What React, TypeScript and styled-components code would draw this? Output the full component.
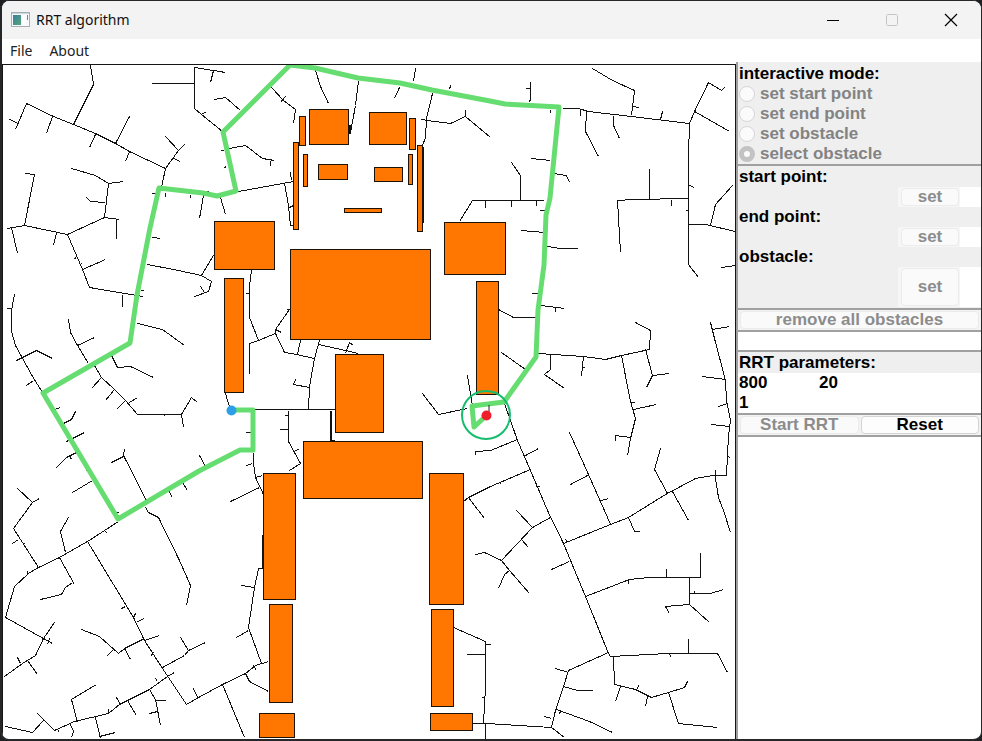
import React from "react";
import styled, { createGlobalStyle } from "styled-components";

const GlobalStyle = createGlobalStyle`
  *, *::before, *::after { box-sizing: border-box; }
  body { margin: 0; background: #1f2022; }
  button, input { font: inherit; margin: 0; }
`;

const Frame = styled.div`
  min-height: 100vh;
  display: flex;
  flex-direction: column;
  border: solid #262729;
  border-width: 1px 1px 2px 2px;
  border-radius: 9px;
  overflow: hidden;
  background: #fff;
  color: #000;
`;

const TitleBar = styled.header`
  display: flex;
  align-items: center;
  height: 38px;
  padding: 0 1px 0 9px;
  background: #f3f3f3;
  font: 14px/20px "Noto Sans", "Open Sans", sans-serif;
`;

const AppIcon = styled.svg`
  width: 19px;
  height: 16px;
  margin-right: 6px;
`;

const Title = styled.h1`
  flex: 1;
  margin: 0;
  font: inherit;
  color: #111;
`;

const CaptionButton = styled.button`
  display: grid;
  place-items: center;
  width: 59px;
  height: 38px;
  padding: 0;
  border: 0;
  background: none;
  svg { width: 14px; height: 14px; }
`;

const MenuBar = styled.nav`
  display: flex;
  align-items: center;
  gap: 17px;
  height: 23px;
  padding-left: 8px;
  font: 14px/20px "Noto Sans", "Open Sans", sans-serif;
`;

const MenuItem = styled.button`
  padding: 0;
  border: 0;
  background: none;
  color: #222;
`;

const Workspace = styled.main`
  flex: 1;
  display: grid;
  grid-template-columns: minmax(0, 1fr) 245px;
`;

const CanvasPane = styled.section`
  margin-top: 2px;
  border: 1px solid #161616;
  border-bottom: 0;
`;

const Plane = styled.svg`
  display: block;
  width: 100%;
`;

const Sidebar = styled.aside`
  border-left: 2px solid #a0a0a0;
  font: bold 17px/20px "Liberation Sans", Arial, sans-serif;
`;

const Panel = styled.div<{ $top?: number; $bottom?: number; $bg?: string }>`
  padding-top: ${(p) => p.$top ?? 0}px;
  padding-bottom: ${(p) => p.$bottom ?? 0}px;
  border-bottom: 2px solid #a0a0a0;
  background: ${(p) => p.$bg ?? "#efefef"};
`;

const ModeGroup = styled.fieldset`
  margin: 0;
  padding: 0;
  border: 0;
  min-width: 0;
`;

const Heading = styled.legend`
  display: block;
  padding: 0 0 0 1px;
`;

const Caption = styled.label`
  display: block;
  padding-left: 1px;
  background: #efefef;
`;

const RadioRow = styled.label`
  display: flex;
  align-items: center;
  gap: 5px;
  height: 20px;
  padding-left: 1px;
  color: #838383;
`;

const Radio = styled.input`
  appearance: none;
  width: 16px;
  height: 16px;
  border: 1px solid #d6d6d6;
  border-radius: 50%;
  background: #fbfbfb;
  &:checked { border: 5px solid #c3c3c3; }
`;

const FieldRow = styled.div<{ $height: number }>`
  display: grid;
  grid-template-columns: 1fr 62px 21px;
  height: ${(p) => p.$height}px;
`;

const ButtonCell = styled.div`
  grid-column: 2;
  display: grid;
  padding: 1px 1px 1px 3px;
  background: #f6f6f6;
`;

const PushButton = styled.button`
  min-width: 0;
  padding: 0;
  border: 1px solid #ebebeb;
  border-radius: 4px;
  background: #fafafa;
  line-height: 16px;
  color: #000;
  &:enabled { border-color: #d4d4d4; background: #fdfdfd; }
  &:disabled { color: #8c8c8c; }
`;

const TextField = styled.input`
  width: 100%;
  min-width: 0;
  height: 100%;
  padding: 0 0 0 1px;
  border: 0;
  border-radius: 0;
  outline: 0;
  background: #fff;
  color: #000;
`;

const ButtonRow = styled.div<{ $columns: number }>`
  display: grid;
  grid-template-columns: repeat(${(p) => p.$columns}, 1fr);
  gap: 2px;
  height: 20px;
  padding: 1px 2px;
`;

const StatusLine = styled.output`
  display: block;
  height: 18px;
`;

const ParameterGrid = styled.div`
  display: grid;
  grid-template-columns: repeat(2, 80px);
  grid-auto-rows: 20px;
  background: #fff;
`;

const branches = [
  "M90,65 L93,84 L73,124 M26,103 L53,116 L73,124 L95,133 L115,143 L129,151 L165,168 L161,187",
  "M26,103 L15,129 M9,119 L18,123 M52,116 L46,133 M95,134 L89,147 M129,116 L115,143 M129,151 L125,161",
  "M165,168 L178,150 L184,144 M165,136 L178,150 M173,158 L180,161",
  "M151,83 H194 M194,67 V108 L201,114 L222,131 M201,114 L206,111 M194,67 L213,70 L225,72 M213,70 L210,82",
  "M214,99 L225,97 L240,110 M220,150 h3 M229,148 L245,145 L262,158 L274,160 M270,160 V165 M226,166 L224,167",
  "M151,193 h4 M165,192 v4 M190,194 v3 M205,193 L209,190 M203,195 L199,218 M220,197 L225,214 M238,191 L293,181",
  "M25,173 L34,174 L24,225 M71,168 L95,175 L108,183 L123,181 M108,183 L104,217 L119,219 M86,197 L90,201 L105,202",
  "M104,217 L67,234 M116,219 V238 M7,228 L24,225 L67,234 L82,269 L89,287 L136,295 L143,296 M11,227 L17,253",
  "M56,232 L53,245 M82,269 L105,259 M122,294 V306 M74,258 l2,-1 M79,265 L81,263 M152,237 L160,238",
  "M147,264 L178,270 L201,275 L213,255 M201,275 L211,281 L208,291 L194,296 M200,286 L204,292 M140,290 h3",
  "M14,294 L11,310 V331 L15,345 L21,356 L32,376 L42,392 M6,308 H11 M16,360 L36,350 L52,358 M26,385 L33,380",
  "M68,319 L70,332 L77,345 L88,363 M77,345 L94,337 M94,365 L101,377 L114,389 L125,400 L137,414 H181 L191,397 L197,402",
  "M101,377 L91,388 M114,389 L105,400 M125,400 L116,409 M129,402 L137,397 M181,414 L183,427 M163,414 L165,416",
  "M137,323 L162,329 L184,345 M111,355 L117,367 L130,366 L153,377 M54,409 L60,407 M63,423 L71,419 L75,411",
  "M66,441 L84,432 M225,393 L230,410 M124,449 L123,455 L147,502 M111,462 L123,456 M145,507 L148,512 L158,517 L179,560 L190,585 L186,605",
  "M55,468 L66,457 L76,452 M69,455 L71,459 M72,492 L92,480 M85,470 h2 M115,512 h3",
  "M17,488 L32,502 L39,498 M32,502 L13,528 L38,567 M12,543 L18,539 M22,545 l2,-2",
  "M118,521 L87,541 L59,557 L38,567 L28,573 L14,586 L5,617 L43,638 L52,643 M27,570 v3 M104,530 L107,533",
  "M68,517 L60,531 L65,552 M59,557 L74,584 M72,582 L65,587 L61,594 L40,599",
  "M87,541 L113,584 L133,617 L144,640 L162,668 L186,704 L198,697 L222,684 L245,673 L255,665 L268,661",
  "M125,606 L121,608 M133,617 L135,613 M137,621 L144,618 M144,640 L159,635 M153,652 l-3,4",
  "M54,622 L43,638 L35,655 L22,663 L4,676 M47,644 L49,638 M17,657 L20,663 M27,660 L37,674",
  "M81,629 L99,636 L118,653 L124,648 L144,638 M113,649 L106,656 M124,648 L130,659",
  "M162,667 L184,655 L188,650 L205,642 M180,637 L188,650 M174,672 L167,676 L149,689 L119,704 L108,713 L74,721 L54,730 L37,713",
  "M5,726 L32,732 L43,720 M96,684 L71,699 L77,722 M116,697 L120,704 M127,700 L136,715 M149,689 L155,699 L160,725",
  "M155,700 h10 M149,713 L157,711 M155,678 L157,681 M95,717 L100,738 M99,736 L115,732 M70,724 L73,731 L71,737",
  "M108,708 v4 M57,729 l2,3 M193,688 L197,697 M222,684 L244,737 M245,673 L250,682 M199,455 L205,466",
  "M168,490 L172,497 M182,482 L187,490 M230,501 L259,487 M241,585 L254,587 M262,568 H258 L254,587 L248,627 L261,663",
  "M236,637 L248,630 M245,673 L249,681 L268,691 M253,665 l3,5",
  "M271,87 L283,100 L295,109 L293,123 M280,102 l5,-6 M315,70 L320,86 L328,103 M358,81 L355,105 L350,132 h-2",
  "M415,68 L413,81 M399,87 L394,98 M432,93 L426,118 L425,137 L422,145 M421,119 L427,120 L450,123 L465,116 L490,137",
  "M465,109 V116 M449,89 L450,85 M290,172 L291,180 M284,183 L288,205 L290,225 h3 M289,207 L293,205",
  "M459,221 L472,200 H543 M485,200 V207 M251,270 L249,285 V317 L258,340 L249,343 V373 M245,293 h4",
  "M258,340 L275,333 V329 L289,309 M286,309 h3 M275,333 L284,352 L296,354 L314,358 M275,329 L281,332",
  "M300,340 L297,354 M319,340 L314,358 L309,386 L308,409 M318,344 L345,350 L358,353 M349,342 L345,353 M349,343 l4,1",
  "M309,387 L293,384 L295,379 M254,409 H335 M288,410 V441 L300,463 L289,470 M284,415 h4 M279,429 H288 M294,451 L299,448",
  "M245,432 h5 M253,452 V463 L255,477 L263,494 M246,465 L252,463 M255,477 L262,475",
  "M422,393 L438,414 L467,408 M467,375 L472,405 M475,454 V451 L490,450 L517,439 M463,501 L468,497 L490,486 L530,469 M468,497 L484,518",
  "M592,68 L612,80 L634,90 L631,115 M525,88 h5 M530,81 V98 L529,102 M562,108 H578 L588,111 L631,116 L689,123",
  "M580,109 v6 M586,111 L585,131 L598,156 M613,115 V125 L619,138 M632,106 l7,1 M660,119 L662,111",
  "M689,123 L694,111 L708,82 L721,90 L724,87 M694,111 L729,131 M689,123 L688,155 V264 L698,277 M689,185 l5,2",
  "M688,198 L632,199 L617,200 L620,252 M649,168 V198 M671,199 V205 M685,210 h3 M688,224 H705 L735,231",
  "M710,225 L715,204 L732,185 M721,267 L735,265 M531,158 L550,160 M553,173 L566,175 L569,182",
  "M511,162 L520,175 V200 M511,200 V206 M536,200 V205 M539,210 h6 M521,230 L544,232 M547,246 L560,248 H577 M550,109 v3",
  "M531,293 h6 M540,305 L564,308 M555,307 v4 M498,309 L513,317 H536 M501,352 L525,369",
  "M538,353 L583,356 L605,359 L621,355 L649,349 L650,330 L635,322 M550,354 V369 L544,374 L564,388 M583,356 L581,376 M582,366 l3,2",
  "M621,355 L630,401 L635,418 L630,438 L627,455 M630,402 h4 M633,409 L656,404 M645,349 L652,375 L646,387 M652,375 L669,373",
  "M630,437 L615,435 V440 M710,322 L714,338 L725,380 L726,400 L730,420 L728,435 L726,475 H712 L695,478 L665,494 L628,517",
  "M712,329 L729,326 M702,376 L725,379 M718,406 L727,403 M711,424 L729,426 M715,469 V478 L718,497 L723,510 L730,532 M728,456 l2,2",
  "M660,448 L654,469 L667,493 M672,491 L688,520 M569,432 L588,474 L604,510 L610,524 M570,484 L589,474 M601,500 L608,498",
  "M504,403 L517,440 L530,470 L547,510 L563,543 L585,596 L608,653 L610,656 M525,455 L538,448 M499,482 l2,2 M535,486 h4",
  "M563,543 L610,524 L628,517 L634,531 H639 M565,539 l2,3 M516,510 L532,527 L550,517 M532,527 L501,560 L484,552 L475,554",
  "M521,539 L528,547 M501,560 L509,570 L529,593 M509,570 L504,574 L498,588 M551,569 L569,561",
  "M585,596 L629,579 L649,577 H700 V552 M666,568 V577 M628,579 v4 M689,577 V604 L665,606 L669,613",
  "M689,593 H710 L723,589 M694,590 v3 M689,604 L709,622 M610,656 L667,653 H717 L727,672 M688,638 V653 M669,654 l2,3",
  "M613,656 L614,684 L635,689 L651,697 L668,692 L684,687 L687,681 M620,686 L615,701 M636,690 L638,685 M647,696 L645,706",
  "M668,692 L678,723 L717,727 M608,652 L568,670 L563,686 L555,710 L551,727 L564,737 M555,668 L568,672",
  "M563,686 L577,690 H592 M556,709 L589,721 L612,732 M560,710 l-1,4 M544,716 l7,2 M472,723 H486 L551,727",
  "M453,627 L485,641 V687 L483,723 M466,654 H485 M485,644 h5 M481,697 h3 M485,723 V739",
];

const denseBranches = "M262,534 V568 M330,410 V440 h4 M422,146 V222 M349,124 V133";

const solution =
  "231,410 253,410 253,450 240,450 199,471 118,519 43,393 130,343 137,295 150,228 159,188 203,193 217,196 236,191 223,132 290,65 315,68 358,78 400,83 432,90 490,101 505,104 559,107 550,198 546,215 544,265 538,310 536,357 504,402 472,406 474,427 487,415";

// [left, top, right, bottom]
const obstacles = [
  [309, 109, 348, 144], [369, 112, 406, 144], [299, 116, 305, 145], [409, 118, 415, 149],
  [293, 142, 298, 229], [303, 154, 307, 186], [318, 164, 347, 179], [374, 167, 402, 181],
  [408, 154, 412, 184], [417, 145, 422, 231], [344, 208, 381, 212], [214, 221, 274, 269],
  [290, 249, 430, 339], [444, 222, 505, 274], [224, 278, 243, 392], [476, 281, 498, 394],
  [335, 354, 383, 432], [303, 441, 422, 498], [263, 473, 295, 599], [429, 473, 463, 604],
  [269, 604, 292, 702], [431, 609, 453, 706], [259, 713, 294, 737], [430, 713, 472, 730],
];

const modes = ["set start point", "set end point", "set obstacle", "select obstacle"];

const targets = [
  { id: "start", label: "start point:", height: 20 },
  { id: "end", label: "end point:", height: 20 },
  { id: "obstacle", label: "obstacle:", height: 40 },
];

function SearchPlane() {
  return (
    <Plane viewBox="3 65 732 674" role="img" aria-label="RRT">
      <g fill="none" stroke="#111" shapeRendering="crispEdges" transform="translate(.5 .5)">
        {branches.map((d) => (
          <path key={d} d={d} />
        ))}
        <path d={denseBranches} strokeWidth="2" />
      </g>
      <g fill="#ff7700" stroke="#1c1208" shapeRendering="crispEdges">
        {obstacles.map(([l, t, r, b]) => (
          <rect key={`${l}-${t}`} x={l} y={t} width={r - l} height={b - t} />
        ))}
      </g>
      <polyline points={solution} fill="none" stroke="#66dd70" strokeWidth="5" strokeLinejoin="round" />
      <circle cx="486" cy="415" r="24" fill="none" stroke="#14bd6e" strokeWidth="2" />
      <path d="M489,405 V412" stroke="#222" />
      <circle cx="231.5" cy="410.5" r="5" fill="#2d9fe6" />
      <circle cx="486.5" cy="415.5" r="5" fill="#ee1f2a" />
    </Plane>
  );
}

export default function App() {
  return (
    <>
      <GlobalStyle />
      <Frame>
        <TitleBar>
          <AppIcon viewBox="0 0 19 16" aria-hidden="true">
            <defs>
              <linearGradient id="pane" x1="0" y1="0" x2="1" y2="1">
                <stop offset="0" stopColor="#3f7f9d" />
                <stop offset="1" stopColor="#4fa77a" />
              </linearGradient>
            </defs>
            <rect x=".5" y=".5" width="18" height="14" fill="#f7f9fa" stroke="#a5b0b6" />
            <path d="M1 1.5H18" stroke="#cbd5da" />
            <rect x="2" y="3" width="8" height="10" fill="url(#pane)" />
            <rect x="11" y="3" width="4" height="10" fill="#fff" />
            <path d="M16.5 3V8" stroke="#58977f" />
          </AppIcon>
          <Title>RRT algorithm</Title>
          <CaptionButton aria-label="Minimize">
            <svg viewBox="0 0 14 14"><path d="M1 7.5H13" stroke="#000" /></svg>
          </CaptionButton>
          <CaptionButton aria-label="Maximize" disabled>
            <svg viewBox="0 0 14 14"><rect x="1.5" y="1.5" width="11" height="11" rx="1" fill="none" stroke="#c4c4c4" /></svg>
          </CaptionButton>
          <CaptionButton aria-label="Close">
            <svg viewBox="0 0 14 14"><path d="M1 1L13 13M13 1L1 13" stroke="#000" strokeWidth="1.2" /></svg>
          </CaptionButton>
        </TitleBar>
        <MenuBar>
          <MenuItem>File</MenuItem>
          <MenuItem>About</MenuItem>
        </MenuBar>
        <Workspace>
          <CanvasPane>
            <SearchPlane />
          </CanvasPane>
          <Sidebar>
            <Panel $top={2}>
              <ModeGroup disabled>
                <Heading>interactive mode:</Heading>
                {modes.map((mode) => (
                  <RadioRow key={mode}>
                    <Radio type="radio" name="mode" defaultChecked={mode === "select obstacle"} />
                    {mode}
                  </RadioRow>
                ))}
              </ModeGroup>
            </Panel>
            <Panel $top={1} $bottom={1}>
              {targets.map(({ id, label, height }) => (
                <React.Fragment key={id}>
                  <Caption htmlFor={id}>{label}</Caption>
                  <FieldRow $height={height}>
                    <ButtonCell>
                      <PushButton disabled>set</PushButton>
                    </ButtonCell>
                    <TextField id={id} />
                  </FieldRow>
                </React.Fragment>
              ))}
            </Panel>
            <Panel $bg="#f3f3f3">
              <ButtonRow $columns={1}>
                <PushButton disabled>remove all obstacles</PushButton>
              </ButtonRow>
            </Panel>
            <Panel $bg="#fff">
              <StatusLine />
            </Panel>
            <Panel $top={1}>
              <Caption id="parameters" htmlFor="parameter-800">RRT parameters:</Caption>
              <ParameterGrid>
                {["800", "20", "1"].map((value) => (
                  <TextField key={value} id={`parameter-${value}`} aria-labelledby="parameters" defaultValue={value} />
                ))}
              </ParameterGrid>
            </Panel>
            <Panel $bg="#f3f3f3">
              <ButtonRow $columns={2}>
                <PushButton disabled>Start RRT</PushButton>
                <PushButton>Reset</PushButton>
              </ButtonRow>
            </Panel>
          </Sidebar>
        </Workspace>
      </Frame>
    </>
  );
}
